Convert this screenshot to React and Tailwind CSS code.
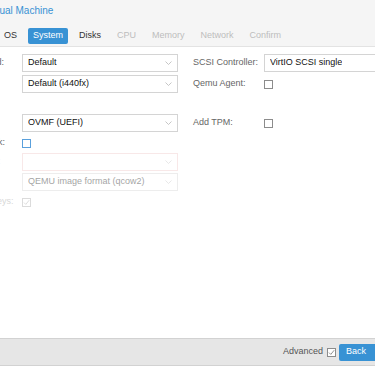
import React from 'react';

const TABS = [
  { name: 'General', state: 'done' },
  { name: 'OS', state: 'done' },
  { name: 'System', state: 'active' },
  { name: 'Disks', state: 'done' },
  { name: 'CPU', state: 'off' },
  { name: 'Memory', state: 'off' },
  { name: 'Network', state: 'off' },
  { name: 'Confirm', state: 'off' },
];

const Chevron = () => (
  <svg width="7" height="4" viewBox="0 0 7 4" className="shrink-0">
    <path d="M0.5 0.5 L3.5 3.5 L6.5 0.5" fill="none" stroke="#b8b8b8" strokeWidth="0.8" />
  </svg>
);

function Combo({ value, className = '', invalid, disabled }) {
  return (
    <div
      className={`h-[18px] flex items-center justify-between pl-[5px] pr-[5px] bg-white border ${
        invalid ? 'border-[#f0c8c8]' : 'border-[#d4d4d4]'
      } ${disabled ? 'opacity-40' : ''} ${className}`}
    >
      <span className="text-[9px] text-[#111] truncate">{value}</span>
      <Chevron />
    </div>
  );
}

function Check({ checked, focused, disabled }) {
  return (
    <div
      className={`w-[9px] h-[9px] border bg-white flex items-center justify-center ${
        focused ? 'border-[#5aa0dc]' : 'border-[#8c8c8c]'
      } ${disabled ? 'opacity-30' : ''}`}
    >
      {checked && (
        <svg width="7" height="7" viewBox="0 0 7 7">
          <path d="M1 3.6 L2.8 5.4 L6.2 1.2" fill="none" stroke="#777" strokeWidth="0.8" />
        </svg>
      )}
    </div>
  );
}

// mb: 다음 행까지의 간격
function Row({ label, children, disabled, mb = 'mb-[2px]', labelW = 'w-[71px]' }) {
  return (
    <div className={`flex items-center h-[18px] ${mb}`}>
      <div className={`${labelW} shrink-0 text-[9px] whitespace-nowrap ${disabled ? 'text-[#d8d8d8]' : 'text-[#666]'}`}>
        {label}
      </div>
      <div className="flex-1 flex items-center">{children}</div>
    </div>
  );
}

export default function App() {
  return (
    <div className="w-[375px] h-[367px] overflow-hidden bg-white flex flex-col font-['Liberation_Sans',Arial,sans-serif]">
      {/* 헤더: 제목 + 탭 */}
      <div className="h-[47px] shrink-0 bg-[#f5f5f5] border-b border-[#e3e3e3]">
        <div className="ml-[-51px] pt-[4px] h-[20px] text-[10px] text-[#3892d4] whitespace-nowrap leading-[14px]">
          Create: Virtual Machine
        </div>
        <div className="ml-[-49px] mt-[8px] flex gap-[6px] whitespace-nowrap">
          {TABS.map(t => (
            <div
              key={t.name}
              className={`h-[16px] px-[5px] flex items-center text-[9px] rounded-[2px] ${
                t.state === 'active'
                  ? 'bg-[#3892d4] text-white'
                  : t.state === 'done'
                  ? 'text-[#333]'
                  : 'text-[#bdbdbd]'
              }`}
            >
              {t.name}
            </div>
          ))}
        </div>
      </div>

      {/* 본문 */}
      <div className="flex-1 flex pt-[7px]">
        <div className="ml-[-50px] w-[228px] shrink-0">
          <Row label="Graphic card:" mb="mb-[3px]" labelW="w-[72px]">
            <Combo value="Default" className="w-full" />
          </Row>
          <Row label="Machine:" mb="mb-[21px]" labelW="w-[72px]">
            <Combo value="Default (i440fx)" className="w-full" />
          </Row>
          <Row label="BIOS:" labelW="w-[72px]">
            <Combo value="OVMF (UEFI)" className="w-full" />
          </Row>
          <Row label="Add EFI Disk:" mb="mb-[1px]" labelW="w-[72px]">
            <Check focused />
          </Row>
          <Row label="EFI Storage:" disabled labelW="w-[72px]">
            <Combo value="" invalid disabled className="w-full" />
          </Row>
          <Row label="Format:" disabled labelW="w-[72px]">
            <Combo value="QEMU image format (qcow2)" disabled className="w-full" />
          </Row>
          <Row label="Pre-Enroll keys:" disabled labelW="w-[72px]">
            <Check checked disabled />
          </Row>
        </div>
        <div className="ml-[15px] w-[200px] shrink-0">
          <Row label="SCSI Controller:" mb="mb-[3px]">
            <Combo value="VirtIO SCSI single" className="w-full" />
          </Row>
          <Row label="Qemu Agent:" mb="mb-[21px]">
            <Check />
          </Row>
          <Row label="Add TPM:">
            <Check />
          </Row>
        </div>
      </div>

      {/* 하단 버튼 */}
      <div className="h-[28px] shrink-0 mb-[1px] bg-[#e6e6e6] border-t border-b border-[#d2d2d2] flex items-center justify-end">
        <span className="text-[9px] text-[#555] mr-[4px]">Advanced</span>
        <Check checked />
        <div className="ml-[3px] mr-[-10px] h-[17px] w-[46px] rounded-[2px] bg-[#3892d4] text-white text-[9px] flex items-center pl-[7px]">
          Back
        </div>
      </div>
    </div>
  );
}
